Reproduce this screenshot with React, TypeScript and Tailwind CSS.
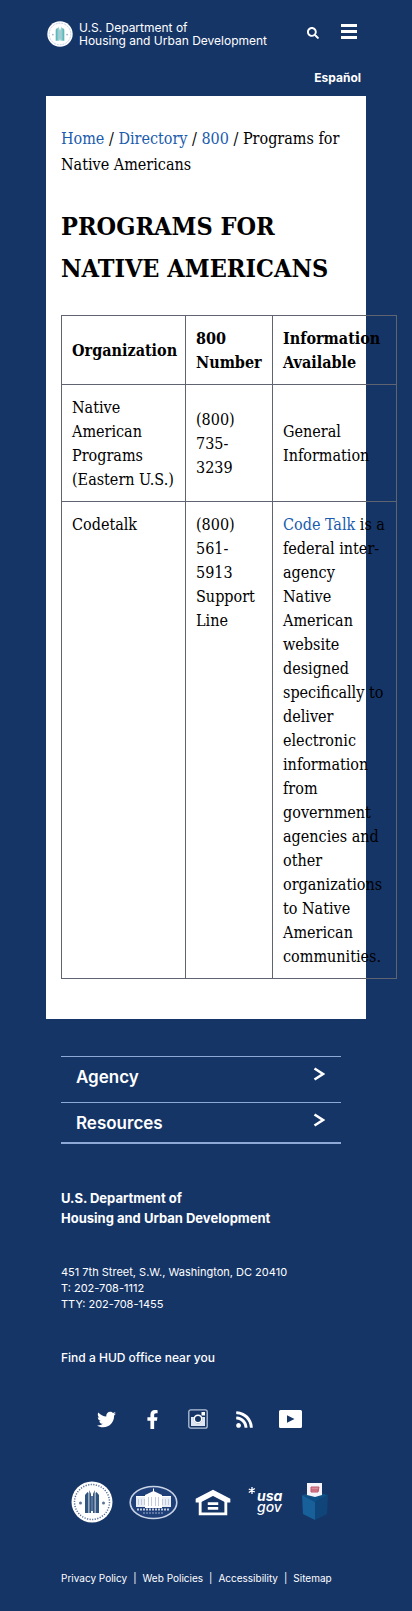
import { FaSearch, FaTwitter, FaFacebookF, FaRss } from "react-icons/fa";

const serif = "font-['DejaVu_Serif_Condensed','DejaVu_Serif',serif]";

function HudSeal({ className, ring, figure }: { className: string; ring: string; figure: string }) {
  return (
    <svg viewBox="0 0 42 42" className={className} aria-hidden="true">
      <circle cx="21" cy="21" r="20.5" fill="#fff" />
      <circle cx="21" cy="21" r="17.5" fill="none" stroke={ring} strokeWidth="1.5" strokeDasharray="1.2 1.4" />
      <circle cx="21" cy="21" r="15" fill="#fff" />
      <path d="M14 32V14l2.500-3 1 1v20zM18.300 32V9l1.700 4v19zM22 32V13l1.700-4v23zM24.500 32V12l1-1 2.500 3v18z" fill={figure} />
      <path d="M20 15h2v15h-2z" fill={ring} />
      <circle cx="9.5" cy="22" r="1.5" fill={ring} />
      <circle cx="32.5" cy="22" r="1.5" fill={ring} />
    </svg>
  );
}

function WhiteHouse() {
  return (
    <svg viewBox="0 0 49 35" className="w-[49px] shrink-0" aria-hidden="true">
      <ellipse cx="24.5" cy="17.5" rx="23.3" ry="16" fill="#1f3f78" stroke="#c9d3e6" strokeWidth="1.6" />
      <path d="M7 12h10v10H7zM32 12h10v10H32z" fill="#e9edf5" />
      <path d="M16 10l8.500-4 8.500 4v13H16z" fill="#fff" />
      <path d="M24.500 3.500v4M7 11.500h35" stroke="#fff" strokeWidth="1" />
      <path d="M9.500 14v6M12.500 14v6M15.500 14v6M33.500 14v6M36.500 14v6M39.500 14v6M19.500 12v9M22.500 12v9M26.500 12v9M29.500 12v9" stroke="#b3bfd6" strokeWidth="0.800" />
      <path d="M8 24.500h33" stroke="#c3cde0" strokeWidth="2" strokeDasharray="2 1" />
      <path d="M14 28h21" stroke="#7388b0" strokeWidth="1.500" strokeDasharray="2 1" />
    </svg>
  );
}

function EqualHousing() {
  return (
    <svg viewBox="0 0 40 30" className="w-[38px] shrink-0" fill="none" stroke="#fff" aria-hidden="true">
      <path d="M6.500 13v14.300h27V13" strokeWidth="3" />
      <path d="M2.500 14.500v-2.800L20 2.800l17.500 8.900v2.800h-4L20 7.500 6.500 14.500z" fill="#fff" strokeWidth="1.500" />
      <path d="M14.500 16.500h11M14.500 21.500h11" strokeWidth="3" />
    </svg>
  );
}

function UsaGov() {
  return (
    <svg viewBox="0 0 36 32" className="w-9 shrink-0" fill="#fff" role="img" aria-label="USA.gov">
      <path d="M4 1v7M0.800 3l6 3M6.800 2.500l-6 4" stroke="#fff" strokeWidth="1.300" />
      <text x="9" y="15" className="font-['Inter',sans-serif] text-[14px] font-bold italic">usa</text>
      <text x="9" y="26" className="font-['Inter',sans-serif] text-[14px] font-medium italic">gov</text>
    </svg>
  );
}

function BallotBox() {
  return (
    <svg viewBox="0 0 30 40" className="w-[30px] shrink-0" aria-hidden="true">
      <path d="M2 13l13-3 13 3-13 7z" fill="#0e4f86" />
      <path d="M2 13l13 7v18L3 32z" fill="#17609a" />
      <path d="M28 13l-13 7v18l12-6z" fill="#10457a" />
      <path d="M7 1h15v12l-7 2-8-2z" fill="#f4f4fa" />
      <path d="M11 5h8l-1 5h-7zM11 8h8" fill="#d88a98" stroke="#c0566b" strokeWidth="1" />
    </svg>
  );
}

function Instagram() {
  return (
    <svg viewBox="0 0 20 20" className="size-5" aria-hidden="true">
      <rect x="0.800" y="0.800" width="18.400" height="18.400" rx="2" fill="none" stroke="#b4c1d8" strokeWidth="1.300" />
      <path d="M3 8h3a4.500 4.500 0 1 0 8 0h3v9H3z" fill="#dfe6f2" />
      <circle cx="10" cy="10" r="3.800" fill="none" stroke="#fff" strokeWidth="1.600" />
      <rect x="13.500" y="3" width="3.500" height="3.500" fill="#fff" />
    </svg>
  );
}

function YouTube() {
  return (
    <svg viewBox="0 0 23 18" className="w-[23px]" aria-hidden="true">
      <path d="M1.500 0h20Q23 0 23 1.500v15q0 1.500-1.500 1.500h-20Q0 18 0 16.500v-15Q0 0 1.500 0zM8 5.200v7.600L15.500 9z" fill="#fff" fillRule="evenodd" />
    </svg>
  );
}

const social = [
  { name: "Twitter", icon: <FaTwitter className="size-[19px]" /> },
  { name: "Facebook", icon: <FaFacebookF className="size-[19px]" /> },
  { name: "Instagram", icon: <Instagram /> },
  { name: "RSS", icon: <FaRss className="size-[19px]" /> },
  { name: "YouTube", icon: <YouTube /> },
];

function AccordionRow({ label }: { label: string }) {
  return (
    <button type="button" className="flex w-full items-start justify-between border-t border-[#8ea9d6] pr-4 pl-[15px] text-left">
      <span className="pt-2 text-[17px] leading-6 font-semibold">{label}</span>
      <svg viewBox="0 0 12 14" className="mt-[10px] h-[14px] w-3" fill="none" stroke="#fff" strokeWidth="2.600" aria-hidden="true">
        <path d="M1.500 1.500L10 7l-8.500 5.500" />
      </svg>
    </button>
  );
}

export default function App() {
  return (
    <div className="min-h-screen overflow-x-hidden bg-[#163567] px-[46px] font-['Inter',sans-serif] text-white">
      <header className="h-24">
        <div className="flex items-start justify-between pt-[21px]">
          <a href="#home" className="flex items-center gap-[6px] pl-px">
            <HudSeal className="size-[26px] shrink-0" ring="#9cb3d0" figure="#5fb9b8" />
            <span className="text-xs leading-[13px] whitespace-nowrap">
              U.S. Department of
              <br />
              Housing and Urban Development
            </span>
          </a>
          <div className="flex items-start gap-[22px] pr-[9px]">
            <button type="button" aria-label="Search" className="pt-[6px]">
              <FaSearch className="size-3" />
            </button>
            <button type="button" aria-label="Menu" className="flex w-4 flex-col gap-[3px] pt-[3px]">
              <span className="h-[3px] w-full bg-white" />
              <span className="h-[3px] w-full bg-white" />
              <span className="h-[3px] w-full bg-white" />
            </button>
          </div>
        </div>
        <div className="flex justify-end pt-[21px] pr-[5px]">
          <a href="#es" className="text-xs leading-5 font-bold">
            Español
          </a>
        </div>
      </header>

      <main className={`bg-white px-[15px] pt-[30px] pb-10 text-black ${serif}`}>
        <nav aria-label="Breadcrumb" className="text-base leading-[26px] whitespace-nowrap">
          <a href="#home" className="text-[#1a5cad]">Home</a> / <a href="#directory" className="text-[#1a5cad]">Directory</a> /{" "}
          <a href="#800" className="text-[#1a5cad]">800</a> / Programs for
          <br />
          Native Americans
        </nav>
        <h1 className="pt-7 pb-[25px] text-[25px] leading-[42px] font-bold whitespace-nowrap">
          PROGRAMS FOR
          <br />
          NATIVE AMERICANS
        </h1>
        <table className="w-[335px] table-fixed border-collapse text-left text-base leading-6 whitespace-nowrap [&_td]:border [&_td]:border-[#5f6470] [&_td]:px-[10px] [&_td]:pt-[11px] [&_td]:pb-[9px] [&_th]:border [&_th]:border-[#5f6470] [&_th]:px-[10px] [&_th]:pt-[11px] [&_th]:pb-[9px]">
          <colgroup>
            <col className="w-[124px]" />
            <col className="w-[87px]" />
            <col className="w-[124px]" />
          </colgroup>
          <thead>
            <tr>
              <th>Organization</th>
              <th>800<br />Number</th>
              <th>Information<br />Available</th>
            </tr>
          </thead>
          <tbody>
            <tr>
              <td>Native<br />American<br />Programs<br />(Eastern U.S.)</td>
              <td>(800)<br />735-<br />3239</td>
              <td>General<br />Information</td>
            </tr>
            <tr className="align-top">
              <td>Codetalk</td>
              <td>(800)<br />561-<br />5913<br />Support<br />Line</td>
              <td>
                <a href="#codetalk" className="text-[#1a5cad]">Code Talk</a> is a<br />federal inter-<br />agency<br />Native<br />American<br />website<br />designed<br />specifically to<br />deliver<br />electronic<br />information<br />from<br />government<br />agencies and<br />other<br />organizations<br />to Native<br />American<br />communities.
              </td>
            </tr>
          </tbody>
        </table>
      </main>

      <footer className="px-[15px] pb-[22px]">
        <div className="mr-[10px] grid h-[125px] auto-rows-[46px] border-b-2 border-[#8ea9d6] pt-[37px] [&>button:last-child]:h-10">
          <AccordionRow label="Agency" />
          <AccordionRow label="Resources" />
        </div>
        <p className="pt-11 text-[13px] leading-5 font-bold whitespace-nowrap">
          U.S. Department of
          <br />
          Housing and Urban Development
        </p>
        <address className="pt-9 text-[11px] leading-4 whitespace-nowrap not-italic">
          451 7th Street, S.W., Washington, DC 20410
          <br />
          T: 202-708-1112
          <br />
          TTY: 202-708-1455
        </address>
        <a href="#offices" className="mt-9 block text-xs leading-5 font-medium">
          Find a HUD office near you
        </a>
        <div className="mt-[41px] flex h-5 pl-[22px]">
          {social.map((s) => (
            <a key={s.name} href="#social" aria-label={s.name} className="flex w-[46px] items-center justify-center">
              {s.icon}
            </a>
          ))}
        </div>
        <div className="mt-[52px] flex h-[42px] items-center gap-4 pl-[10px]">
          <HudSeal className="size-[42px] shrink-0" ring="#5a7199" figure="#2f5480" />
          <WhiteHouse />
          <EqualHousing />
          <UsaGov />
          <BallotBox />
        </div>
        <nav aria-label="Legal" className="mt-[45px] flex gap-[6px] text-[10px] leading-5 whitespace-nowrap">
          <a href="#privacy">Privacy Policy</a>
          <span>|</span>
          <a href="#web">Web Policies</a>
          <span>|</span>
          <a href="#accessibility">Accessibility</a>
          <span>|</span>
          <a href="#sitemap">Sitemap</a>
        </nav>
      </footer>
    </div>
  );
}
